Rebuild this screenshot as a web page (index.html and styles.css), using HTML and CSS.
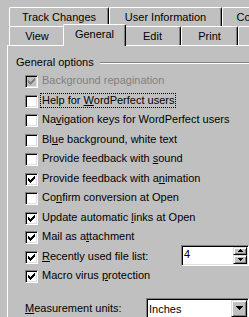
FILE: index.html
```html
<!DOCTYPE html>
<html lang="en">
<head>
    <meta charset="UTF-8">
    <meta name="viewport" content="width=device-width, initial-scale=1.0">
    <title>Options</title>
    <link rel="stylesheet" href="styles.css">
</head>
<body>
    <div class="dialog">
        <div class="tab-row top-row">
            <div class="tab tab-track">Track Changes</div>
            <div class="tab tab-user">User Information</div>
            <div class="tab tab-compat">Compatibility</div>
        </div>
        <div class="tab-row">
            <div class="tab tab-view">View</div>
            <div class="tab tab-general active">General</div>
            <div class="tab tab-edit">Edit</div>
            <div class="tab tab-print">Print</div>
            <div class="tab tab-save"></div>
        </div>

        <div class="panel">
            <div class="section-title">General options</div>

            <div class="option">
                <span class="box disabled"><svg width="11" height="11"><path d="M2 4h1v3H2zM3 5h1v3H3zM4 6h1v3H4zM5 5h1v3H5zM6 4h1v3H6zM7 3h1v3H7zM8 2h1v3H8z"/></svg></span>
                <span class="label disabled">Background repagination</span>
            </div>
            <div class="option">
                <span class="box"></span>
                <span class="label focus">Help for <u>W</u>ordPerfect users</span>
            </div>
            <div class="option">
                <span class="box"></span>
                <span class="label">Na<u>v</u>igation keys for WordPerfect users</span>
            </div>
            <div class="option">
                <span class="box"></span>
                <span class="label">Bl<u>u</u>e background, white text</span>
            </div>
            <div class="option">
                <span class="box"></span>
                <span class="label">Provide feedback with <u>s</u>ound</span>
            </div>
            <div class="option">
                <span class="box"><svg width="11" height="11"><path d="M2 4h1v3H2zM3 5h1v3H3zM4 6h1v3H4zM5 5h1v3H5zM6 4h1v3H6zM7 3h1v3H7zM8 2h1v3H8z"/></svg></span>
                <span class="label">Provide feedback with a<u>n</u>imation</span>
            </div>
            <div class="option">
                <span class="box"></span>
                <span class="label">Co<u>n</u>firm conversion at Open</span>
            </div>
            <div class="option">
                <span class="box"><svg width="11" height="11"><path d="M2 4h1v3H2zM3 5h1v3H3zM4 6h1v3H4zM5 5h1v3H5zM6 4h1v3H6zM7 3h1v3H7zM8 2h1v3H8z"/></svg></span>
                <span class="label">Update automatic <u>l</u>inks at Open</span>
            </div>
            <div class="option">
                <span class="box"><svg width="11" height="11"><path d="M2 4h1v3H2zM3 5h1v3H3zM4 6h1v3H4zM5 5h1v3H5zM6 4h1v3H6zM7 3h1v3H7zM8 2h1v3H8z"/></svg></span>
                <span class="label">Mail as a<u>t</u>tachment</span>
            </div>
            <div class="option">
                <span class="box"><svg width="11" height="11"><path d="M2 4h1v3H2zM3 5h1v3H3zM4 6h1v3H4zM5 5h1v3H5zM6 4h1v3H6zM7 3h1v3H7zM8 2h1v3H8z"/></svg></span>
                <span class="label"><u>R</u>ecently used file list:</span>
                <div class="spin">
                    <span class="field-value">4</span>
                    <div class="spin-buttons">
                        <span class="btn"><svg width="5" height="3"><path d="M2 0h1v1h1v1h1v1H0V2h1V1h1z"/></svg></span>
                        <span class="btn"><svg width="5" height="3"><path d="M0 0h5v1H4v1H3v1H2V2H1V1H0z"/></svg></span>
                    </div>
                </div>
            </div>
            <div class="option">
                <span class="box"><svg width="11" height="11"><path d="M2 4h1v3H2zM3 5h1v3H3zM4 6h1v3H4zM5 5h1v3H5zM6 4h1v3H6zM7 3h1v3H7zM8 2h1v3H8z"/></svg></span>
                <span class="label">Macro virus <u>p</u>rotection</span>
            </div>

            <div class="measure">
                <span class="measure-label"><u>M</u>easurement units:</span>
                <div class="combo">
                    <span class="field-value">Inches</span>
                    <span class="btn combo-btn"><svg width="7" height="4"><path d="M0 0h7v1H6v1H5v1H4v1H3V3H2V2H1V1H0z"/></svg></span>
                </div>
            </div>
        </div>
    </div>
</body>
</html>
```

FILE: styles.css
```css
body {
    margin: 0;
    background-color: #c0c0c0;
    font-family: "Liberation Sans", Arial, sans-serif;
    font-size: 11px;
    color: #000;
    overflow: hidden;
}
.dialog {
    width: 249px;
    height: 317px;
    overflow: hidden;
}

/* Tabs */
.tab-row {
    display: flex;
    align-items: flex-end;
    height: 19px;
    padding-left: 9px;
}
.top-row {
    margin-top: 7px;
}
.tab {
    position: relative;
    flex: none;
    box-sizing: border-box;
    height: 19px;
    padding-top: 3px;
    line-height: 13px;
    text-align: center;
    white-space: nowrap;
    background-color: #c0c0c0;
    border-top: 1px solid #fff;
    border-left: 1px solid #fff;
    border-right: 1px solid #000;
    border-radius: 2px 2px 0 0;
    box-shadow: inset -1px 0 #808080;
}
.tab.active {
    height: 22px;
    margin: 0 -2px -1px;
    z-index: 2;
}
.tab-track { width: 100px; }
.tab-user { width: 113px; }
.tab-compat { width: 92px; }
.tab-view { width: 56px; }
.tab-general { width: 63px; }
.tab-edit { width: 57px; }
.tab-print { width: 57px; }
.tab-save { width: 60px; }

/* Page */
.panel {
    box-sizing: border-box;
    width: 242px;
    height: 272px;
    margin-left: 7px;
    border-top: 1px solid #fff;
    border-left: 1px solid #fff;
}
.section-title {
    display: flex;
    align-items: center;
    margin: 10px 0 4px 8px;
    line-height: 13px;
    white-space: nowrap;
}
.section-title::after {
    content: "";
    flex: 1;
    margin-left: 6px;
    border-top: 1px solid #808080;
    border-bottom: 1px solid #fff;
}

.option {
    display: flex;
    align-items: flex-start;
    height: 19.5px;
    padding-left: 17px;
}
.box {
    flex: none;
    box-sizing: border-box;
    width: 13px;
    height: 13px;
    margin-top: 2px;
    background-color: #fff;
    border: 1px solid;
    border-color: #808080 #fff #fff #808080;
    box-shadow: inset 1px 1px #000, inset -1px -1px #dfdfdf;
}
.box svg {
    display: block;
}
.box.disabled {
    background-color: #c0c0c0;
}
.box.disabled svg {
    fill: #808080;
}
.label {
    margin-left: 2px;
    padding: 0 1px;
    border: 1px solid transparent;
    line-height: 13px;
    white-space: nowrap;
}
.label.focus {
    border: 1px dotted #000;
}
.label.disabled {
    color: #808080;
}

/* Spin box and combo box */
.spin,
.combo {
    display: flex;
    box-sizing: border-box;
    height: 21px;
    background-color: #fff;
    border: 1px solid;
    border-color: #808080 #fff #fff #808080;
    box-shadow: inset 1px 1px #000, inset -1px -1px #dfdfdf;
    padding: 1px;
}
.spin {
    width: 68px;
    margin-left: auto;
    margin-top: -4px;
}
.field-value {
    flex: 1;
    padding: 1px 0 0 1px;
    line-height: 13px;
}
.combo .field-value {
    padding-top: 3px;
}
.spin-buttons {
    display: flex;
    flex-direction: column;
    width: 14px;
}
.btn {
    display: flex;
    align-items: center;
    justify-content: center;
    box-sizing: border-box;
    background-color: #c0c0c0;
    border: 1px solid;
    border-color: #dfdfdf #000 #000 #dfdfdf;
    box-shadow: inset 1px 1px #fff, inset -1px -1px #808080;
}
.spin-buttons .btn {
    flex: 1;
}
.btn svg {
    display: block;
}
.combo-btn {
    width: 16px;
}

.measure {
    display: flex;
    align-items: center;
    margin-top: 10px;
    padding-left: 17px;
}
.measure-label {
    flex: 1;
    line-height: 13px;
    white-space: nowrap;
}
.combo {
    width: 103px;
}
```
